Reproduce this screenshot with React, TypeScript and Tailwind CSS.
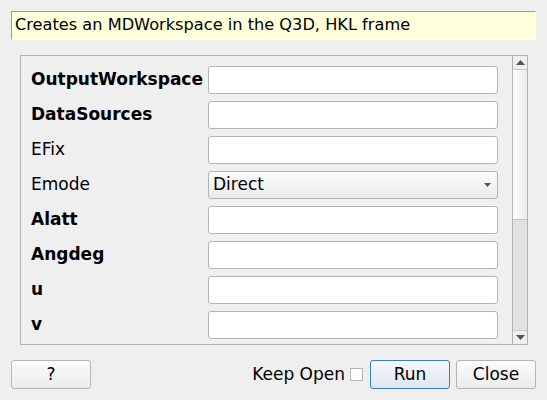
import React from "react"

const rows: { label: string; bold: boolean; combo?: string }[] = [
  { label: "OutputWorkspace", bold: true },
  { label: "DataSources", bold: true },
  { label: "EFix", bold: false },
  { label: "Emode", bold: false, combo: "Direct" },
  { label: "Alatt", bold: true },
  { label: "Angdeg", bold: true },
  { label: "u", bold: true },
  { label: "v", bold: true },
]

function Arrow({ up, small }: { up?: boolean; small?: boolean }) {
  const w = small ? 7 : 9
  const h = small ? 4 : 5
  return (
    <svg width={w} height={h} viewBox={`0 0 ${w} ${h}`} className="block">
      {up ? (
        <polygon points={`0,${h} ${w},${h} ${w / 2},0`} fill="#555" />
      ) : (
        <polygon points={`0,0 ${w},0 ${w / 2},${h}`} fill="#555" />
      )}
    </svg>
  )
}

function Button({ label, primary }: { label: string; primary?: boolean }) {
  return (
    <button
      className={
        primary
          ? "w-[80px] h-[29px] rounded-[3px] border border-[#3b7dbd] bg-gradient-to-b from-[#f6f9fc] to-[#dde6ef] text-[17px] text-black"
          : "w-[80px] h-[29px] rounded-[3px] border border-[#b4b4b4] bg-gradient-to-b from-[#fbfbfb] to-[#ececec] text-[17px] text-black"
      }
    >
      {label}
    </button>
  )
}

export default function App() {
  return (
    <div
      className="w-[547px] h-[400px] bg-[#efefef] px-[11px] pt-[11px] text-black"
      style={{ fontFamily: '"DejaVu Sans", sans-serif' }}
    >
      {/* description */}
      <div className="h-[29px] border-t border-l border-[#9a9a9a] border-r-white border-b-white border-r border-b bg-[#ffffdc] pl-[3px] text-[16.2px] leading-[26px]">
        Creates an MDWorkspace in the Q3D, HKL frame
      </div>

      {/* properties */}
      <div className="mt-[15px] ml-[9px] mr-[8px] h-[290px] border border-[#b2b2b2] flex">
        <div className="flex-1 pl-[10px] pt-[10px] pr-[14px] flex flex-col gap-[7px]">
          {rows.map((r) => (
            <div key={r.label} className="flex items-center h-[28px]">
              <div className={"w-[177px] text-[17px] whitespace-nowrap " + (r.bold ? "font-bold" : "")}>{r.label}</div>
              {r.combo ? (
                <div className="w-[290px] h-[28px] rounded-[3px] border border-[#b4b4b4] bg-gradient-to-b from-[#fbfbfb] to-[#ebebeb] flex items-center justify-between pl-[4px] pr-[6px] text-[17px]">
                  <span>{r.combo}</span>
                  <Arrow small />
                </div>
              ) : (
                <div className="w-[290px] h-[28px] rounded-[3px] border border-[#b4b4b4] bg-white" />
              )}
            </div>
          ))}
        </div>
        <div className="w-[15px] border-l border-[#b2b2b2] flex flex-col">
          <div className="h-[14px] border-b border-[#c8c8c8] flex items-center justify-center bg-[#efefef]">
            <Arrow up />
          </div>
          <div className="h-[150px] bg-gradient-to-r from-[#fdfdfd] to-[#ececec] border-b border-[#c4c4c4]" />
          <div className="flex-1 bg-[#e1e1e1]" />
          <div className="h-[14px] border-t border-[#c8c8c8] flex items-center justify-center bg-[#efefef]">
            <Arrow />
          </div>
        </div>
      </div>

      {/* buttons */}
      <div className="mt-[15px] flex items-center">
        <Button label="?" />
        <div className="flex-1" />
        <span className="text-[17px]">Keep Open</span>
        <div className="ml-[5px] w-[13px] h-[13px] border border-[#b4b4b4] bg-white" />
        <div className="ml-[7px]">
          <Button label="Run" primary />
        </div>
        <div className="ml-[6px]">
          <Button label="Close" />
        </div>
      </div>
    </div>
  )
}
